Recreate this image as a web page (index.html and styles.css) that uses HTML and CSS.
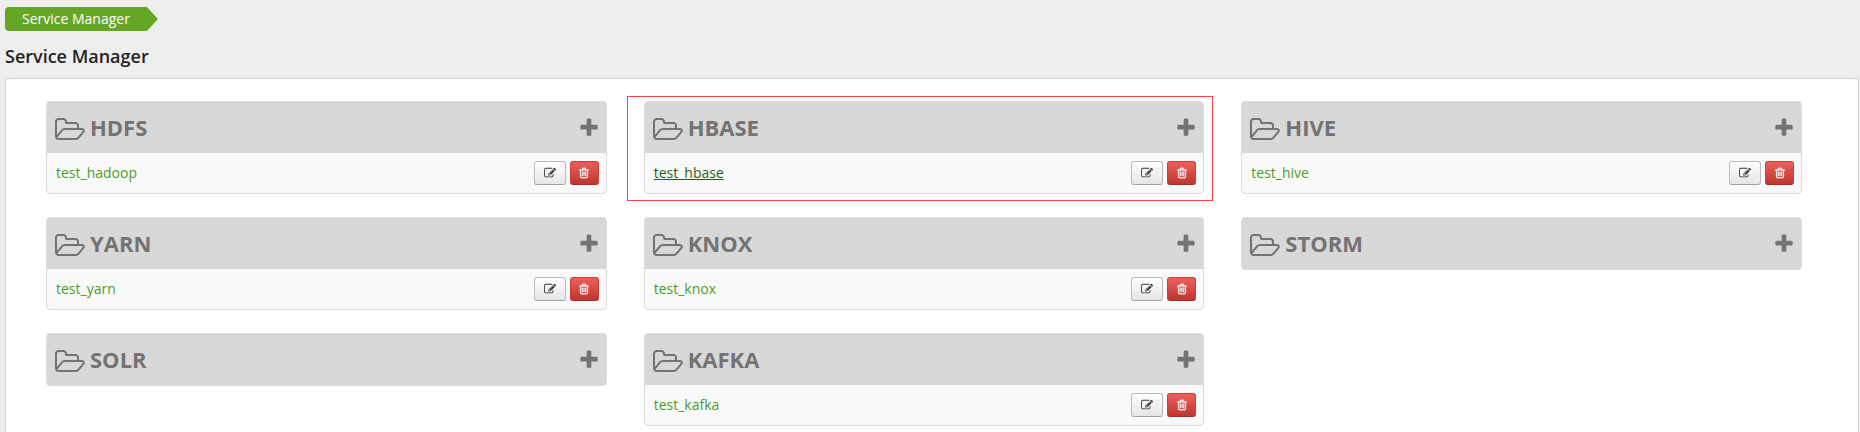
FILE: index.html
```html
<!DOCTYPE html>
<html lang="en">
<head>
<meta charset="utf-8">
<title>Service Manager</title>
<link rel="stylesheet" href="styles.css">
</head>
<body>
<svg class="sprite" aria-hidden="true">
  <symbol id="folder" viewBox="-64 0 1920 1792"><path d="M1717 931q0-35-53-35h-1088q-40 0-85.500 21.500t-71.500 52.500l-294 363q-18 24-18 40 0 35 53 35h1088q40 0 86-22t71-53l294-363q18-22 18-39zm-1141-163h768v-160q0-40-28-68t-68-28h-576q-40 0-68-28t-28-68v-64q0-40-28-68t-68-28h-320q-40 0-68 28t-28 68v853l256-315q44-53 116-87.500t140-34.500zm1269 163q0 62-46 120l-295 363q-43 53-116 87.500t-140 34.500h-1088q-92 0-158-66t-66-158v-960q0-92 66-158t158-66h320q92 0 158 66t66 158v32h544q92 0 158 66t66 158v160h192q54 0 99 24.500t67 70.500q15 32 15 68z"/></symbol>
  <symbol id="plus" viewBox="0 0 1792 1792"><path d="M1600 736v192q0 40-28 68t-68 28h-416v416q0 40-28 68t-68 28h-192q-40 0-68-28t-28-68v-416h-416q-40 0-68-28t-28-68v-192q0-40 28-68t68-28h416v-416q0-40 28-68t68-28h192q40 0 68 28t28 68v416h416q40 0 68 28t28 68z"/></symbol>
  <symbol id="edit" viewBox="0 0 1792 1792"><path d="M888 1184l116-116-152-152-116 116v56h96v96h56zm440-720q-16-16-33 1l-350 350q-17 17-1 33t33-1l350-350q17-17 1-33zm80 594v190q0 119-84.500 203.500t-203.500 84.500h-832q-119 0-203.500-84.500t-84.500-203.500v-832q0-119 84.500-203.500t203.500-84.500h832q63 0 117 25 15 7 18 23 3 17-9 29l-49 49q-14 14-32 8-23-6-45-6h-832q-66 0-113 47t-47 113v832q0 66 47 113t113 47h832q66 0 113-47t47-113v-126q0-13 9-22l64-64q15-15 35-7t20 29zm-96-738l288 288-672 672h-288v-288zm444 132l-92 92-288-288 92-92q28-28 68-28t68 28l152 152q28 28 28 68t-28 68z"/></symbol>
  <symbol id="trash" viewBox="0 0 1792 1792"><path d="M704 736v576q0 14-9 23t-23 9h-64q-14 0-23-9t-9-23v-576q0-14 9-23t23-9h64q14 0 23 9t9 23zm256 0v576q0 14-9 23t-23 9h-64q-14 0-23-9t-9-23v-576q0-14 9-23t23-9h64q14 0 23 9t9 23zm256 0v576q0 14-9 23t-23 9h-64q-14 0-23-9t-9-23v-576q0-14 9-23t23-9h64q14 0 23 9t9 23zm128 724v-948h-896v948q0 22 7 40.500t14.500 27 10.500 8.500h832q3 0 10.500-8.500t14.500-27 7-40.500zm-672-1076h448l-48-117q-7-9-17-11h-317q-10 2-17 11zm928 32v64q0 14-9 23t-23 9h-96v948q0 83-47 143.500t-113 60.500h-832q-66 0-113-58.500t-47-141.500v-952h-96q-14 0-23-9t-9-23v-64q0-14 9-23t23-9h309l70-167q15-37 54-63t79-26h320q40 0 79 26t54 63l70 167h309q14 0 23 9t9 23z"/></symbol>
</svg>
<nav class="breadcrumb"><a class="crumb" href="#">Service Manager</a></nav>
<h1 class="title">Service Manager</h1>
<main class="panel">
  <section class="card">
    <header class="card-head"><svg class="folder"><use href="#folder"/></svg><h2 class="name">HDFS</h2><button class="add" aria-label="Add HDFS service"><svg class="plus"><use href="#plus"/></svg></button></header>
    <div class="row"><a class="link" href="#">test_hadoop</a><button class="btn edit" aria-label="Edit"><svg class="icon"><use href="#edit"/></svg></button><button class="btn delete" aria-label="Delete"><svg class="icon"><use href="#trash"/></svg></button></div>
  </section>
  <section class="card marked">
    <header class="card-head"><svg class="folder"><use href="#folder"/></svg><h2 class="name">HBASE</h2><button class="add" aria-label="Add HBASE service"><svg class="plus"><use href="#plus"/></svg></button></header>
    <div class="row"><a class="link active" href="#">test_hbase</a><button class="btn edit" aria-label="Edit"><svg class="icon"><use href="#edit"/></svg></button><button class="btn delete" aria-label="Delete"><svg class="icon"><use href="#trash"/></svg></button></div>
  </section>
  <section class="card">
    <header class="card-head"><svg class="folder"><use href="#folder"/></svg><h2 class="name">HIVE</h2><button class="add" aria-label="Add HIVE service"><svg class="plus"><use href="#plus"/></svg></button></header>
    <div class="row"><a class="link" href="#">test_hive</a><button class="btn edit" aria-label="Edit"><svg class="icon"><use href="#edit"/></svg></button><button class="btn delete" aria-label="Delete"><svg class="icon"><use href="#trash"/></svg></button></div>
  </section>
  <section class="card">
    <header class="card-head"><svg class="folder"><use href="#folder"/></svg><h2 class="name">YARN</h2><button class="add" aria-label="Add YARN service"><svg class="plus"><use href="#plus"/></svg></button></header>
    <div class="row"><a class="link" href="#">test_yarn</a><button class="btn edit" aria-label="Edit"><svg class="icon"><use href="#edit"/></svg></button><button class="btn delete" aria-label="Delete"><svg class="icon"><use href="#trash"/></svg></button></div>
  </section>
  <section class="card">
    <header class="card-head"><svg class="folder"><use href="#folder"/></svg><h2 class="name">KNOX</h2><button class="add" aria-label="Add KNOX service"><svg class="plus"><use href="#plus"/></svg></button></header>
    <div class="row"><a class="link" href="#">test_knox</a><button class="btn edit" aria-label="Edit"><svg class="icon"><use href="#edit"/></svg></button><button class="btn delete" aria-label="Delete"><svg class="icon"><use href="#trash"/></svg></button></div>
  </section>
  <section class="card">
    <header class="card-head"><svg class="folder"><use href="#folder"/></svg><h2 class="name">STORM</h2><button class="add" aria-label="Add STORM service"><svg class="plus"><use href="#plus"/></svg></button></header>
  </section>
  <section class="card">
    <header class="card-head"><svg class="folder"><use href="#folder"/></svg><h2 class="name">SOLR</h2><button class="add" aria-label="Add SOLR service"><svg class="plus"><use href="#plus"/></svg></button></header>
  </section>
  <section class="card">
    <header class="card-head"><svg class="folder"><use href="#folder"/></svg><h2 class="name">KAFKA</h2><button class="add" aria-label="Add KAFKA service"><svg class="plus"><use href="#plus"/></svg></button></header>
    <div class="row"><a class="link" href="#">test_kafka</a><button class="btn edit" aria-label="Edit"><svg class="icon"><use href="#edit"/></svg></button><button class="btn delete" aria-label="Delete"><svg class="icon"><use href="#trash"/></svg></button></div>
  </section>
</main>
</body>
</html>
```
FILE: styles.css
```css
* { box-sizing: border-box; }
html { scrollbar-width: none; }
body {
  margin: 0;
  padding: 7px 1px 0 5px;
  background: #eee;
  font: 14px/20px "Open Sans", sans-serif;
  color: #222;
}
svg { display: block; fill: currentColor; }
.sprite { position: absolute; width: 0; height: 0; }
.breadcrumb { display: flex; }
.crumb {
  padding: 2px 28px 2px 17px;
  background: #65a624;
  border-radius: 4px 0 0 4px;
  clip-path: polygon(0 0, calc(100% - 11px) 0, 100% 50%, calc(100% - 11px) 100%, 0 100%);
  color: #fff;
  text-decoration: none;
}
.title { margin: 12px 0 9px; font-size: 18px; line-height: 26px; font-weight: 600; }
.panel {
  display: grid;
  grid-template-columns: repeat(3, 1fr);
  align-items: start;
  gap: 23px 37px;
  padding: 22px 56px 22px 40px;
  background: #fff;
  border: 1px solid #d3d3d3;
  border-radius: 4px;
}
.card {
  position: relative;
  background: #f9f9f9;
  border: 1px solid #ddd;
  border-radius: 4px;
}
.marked::after {
  content: "";
  position: absolute;
  inset: -6px -10px -8px -18px;
  border: 1px solid #ff4040;
  pointer-events: none;
}
.card-head {
  display: flex;
  align-items: center;
  height: 51px;
  padding: 0 8px;
  background: #d8d8d8;
  color: #737373;
}
.folder { width: 30px; height: 28px; margin-top: 4px; }
.name { flex: 1; margin: 0 0 2px 5px; font-size: 22px; line-height: 30px; font-weight: 700; }
.add { padding: 0; border: 0; background: none; color: inherit; }
.plus { width: 22px; height: 22px; margin-right: -2px; }
.row { display: flex; align-items: center; gap: 4px; height: 40px; padding: 0 7px 0 9px; }
.link { margin-right: auto; color: #4c9f26; text-decoration: none; }
.active { color: #2c5e12; text-decoration: underline; }
.btn {
  display: flex;
  align-items: center;
  justify-content: center;
  height: 24px;
  padding: 0;
  border-radius: 3px;
}
.edit {
  width: 32px;
  border: 1px solid #bbb;
  border-bottom-color: #a2a2a2;
  background: linear-gradient(#fff, #e6e6e6);
  color: #333;
}
.delete {
  width: 29px;
  border: 1px solid #c9403b;
  border-bottom-color: #a52d28;
  background: linear-gradient(#ee5f5b, #bd362f);
  color: #fff;
}
.icon { width: 12px; height: 12px; }
.delete .icon { stroke: currentColor; stroke-width: 40; }
```
